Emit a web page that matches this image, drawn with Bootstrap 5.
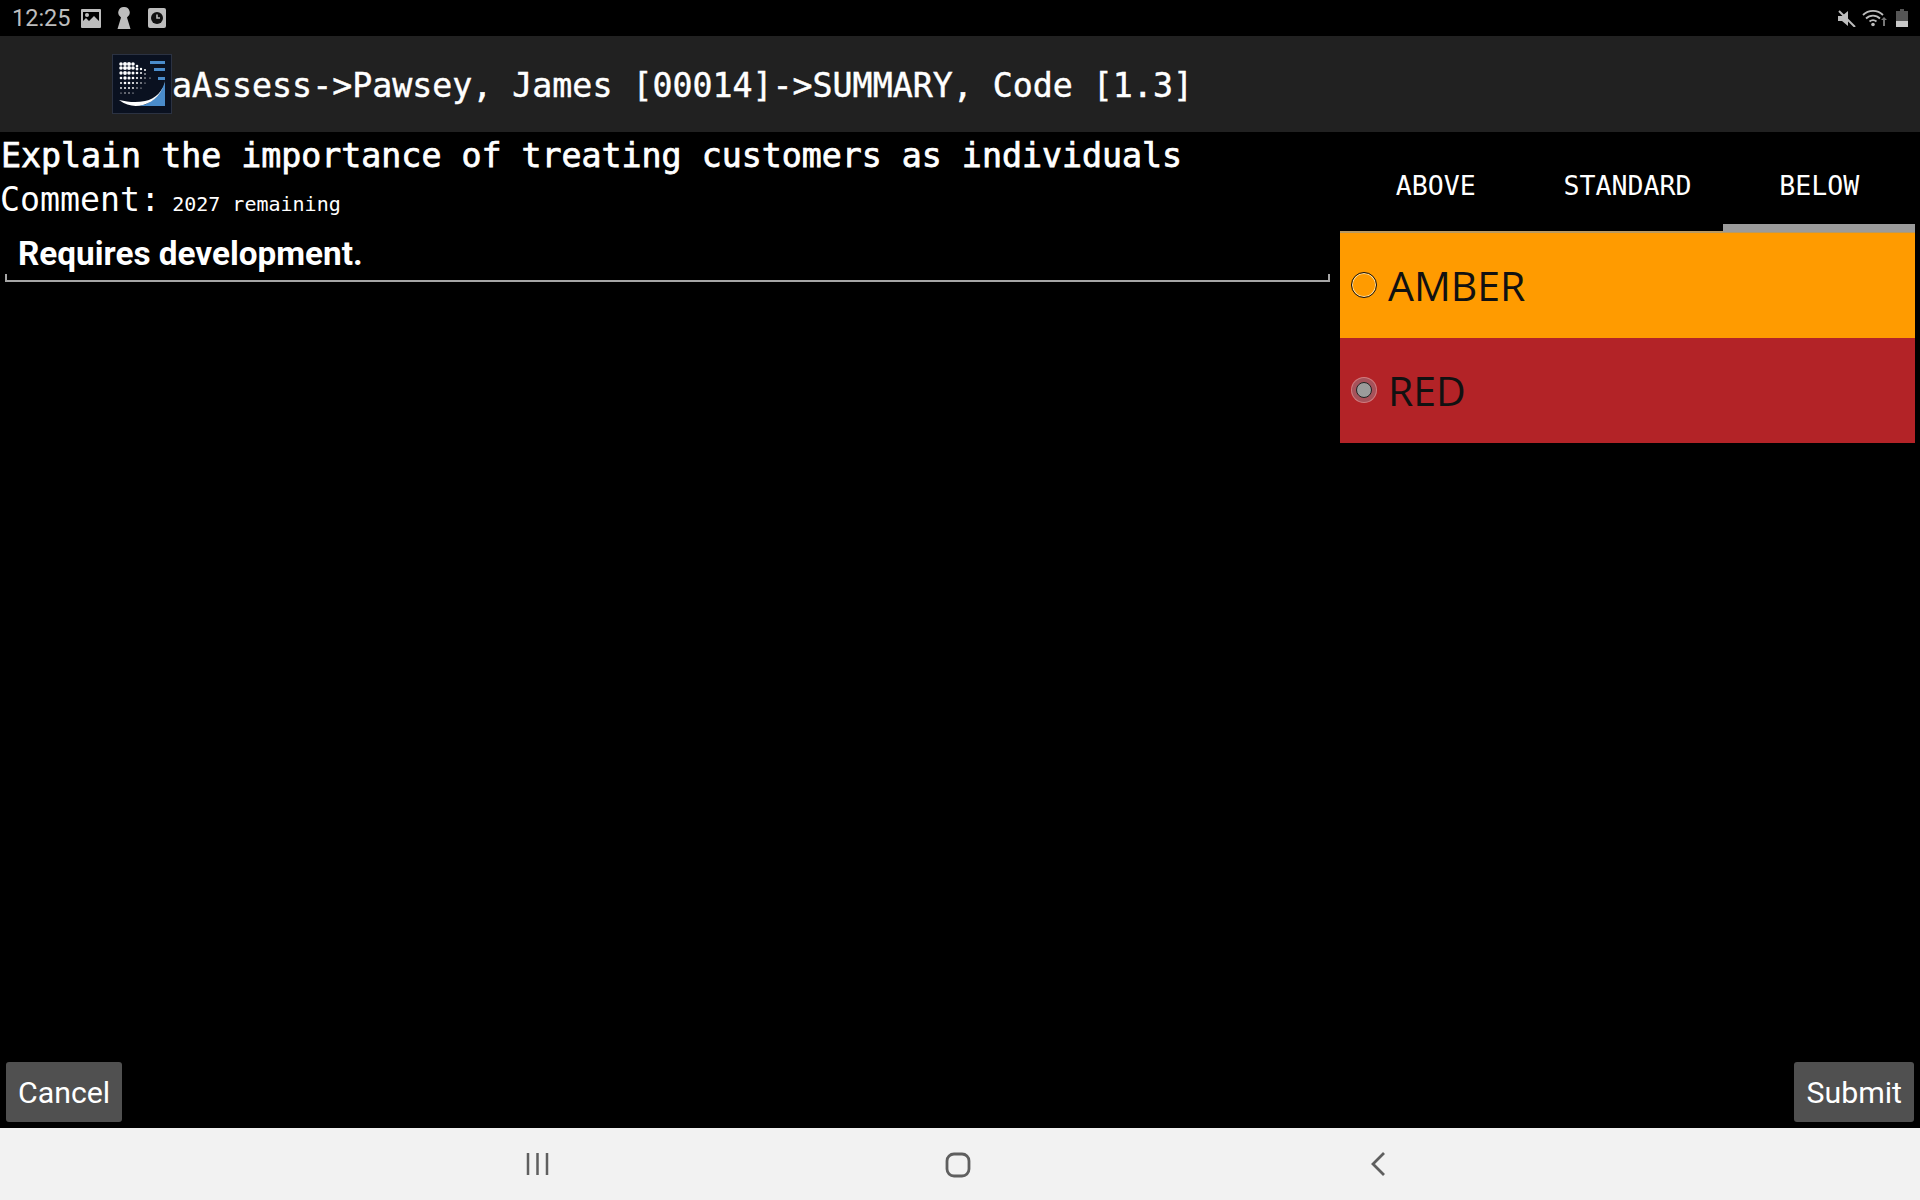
<!DOCTYPE html>
<html lang="en">
<head>
<meta charset="utf-8">
<title>aAssess</title>
<link href="https://cdn.jsdelivr.net/npm/bootstrap@5.3.0/dist/css/bootstrap.min.css" rel="stylesheet">
<style>
html,body{height:100%;}
body{background:#000;color:#fff;overflow:hidden;font-family:"DejaVu Sans Mono",monospace;}
.screen{height:1200px;}
.status-strip{height:36px;background:#000;padding:0 12px 0 12px;color:#bdbdbd;}
.status-time{font-family:Roboto,sans-serif;font-size:23.5px;line-height:36px;width:69px;}
.status-strip svg{display:block;flex:none;}
.app-head{height:96px;background:#212121;padding-left:112px;}
.app-title{font-size:33.25px;line-height:1;white-space:nowrap;-webkit-text-stroke:.45px #fff;padding-top:4px;}
.app-logo{width:60px;height:60px;display:block;flex:none;}
.work-area{min-height:0;}
.left-pane{width:1330px;flex:none;}
.q-text{font-size:33.25px;line-height:44px;padding-left:1px;padding-top:2px;white-space:nowrap;-webkit-text-stroke:.75px #fff;}
.c-label{font-size:33.25px;line-height:44px;white-space:nowrap;}
.c-count{font-size:20px;margin-left:12px;}
.c-field{margin:3px 0 0 5px;height:53px;border-bottom:2px solid #a6a6a6;position:relative;padding-left:13px;font-family:Roboto,sans-serif;font-weight:700;font-size:33.3px;line-height:49px;}
.c-field::before,.c-field::after{content:"";position:absolute;bottom:0;width:2px;height:6px;background:#a6a6a6;}
.c-field::before{left:0;}
.c-field::after{right:0;}
.right-pane{width:575px;margin-left:10px;flex:none;}
.band-tabs{height:99px;}
.band-tabs .nav-link{flex:1 1 0;color:#fff;border-radius:0;font-size:26.6px;line-height:30px;padding:39px 0 0;height:100px;text-align:center;border-bottom:8px solid transparent;}
.band-tabs .nav-link.active{border-bottom-color:#9b9b9b;position:relative;z-index:1;}
.band-rule{height:2px;background:#b99a62;}
.choice{height:105px;margin:0;padding-left:11px;gap:11px;font-family:"Open Sans",sans-serif;font-size:41px;color:#111;}
.choice-amber{background:#ff9b00;}
.choice-red{background:#b32327;}
.choice .form-check-input{width:26px;height:26px;margin:-1px 0 0;flex:none;background:transparent;border:1px solid #111;box-shadow:inset 0 0 0 1px #ffe2a8;}
.choice .form-check-input:checked{background:#9b9b9b;border:1px solid #222;box-shadow:0 0 0 4px #a6525a,0 0 0 5px #cf7d80;width:16px;height:16px;margin:-1px 5px 0;background-image:none;}
.foot-actions{padding:0 6px 6px 6px;}
.act-btn{background:#505050;color:#fff;border:0;border-radius:3px;height:60px;font-family:Roboto,sans-serif;font-size:30.3px;line-height:62px;padding:0 12px;}
.act-btn:hover{background:#505050;color:#fff;}
.sys-nav{height:72px;background:#f2f2f2;position:relative;}
.sys-nav svg{position:absolute;top:22px;}
</style>
</head>
<body>
<div class="screen d-flex flex-column">
  <div class="status-strip d-flex align-items-center">
    <span class="status-time">12:25</span>
    <svg width="20" height="19" viewBox="0 0 20 19" style="margin-right:16px"><path fill="#bdbdbd" fill-rule="evenodd" d="M1 0h18a1 1 0 0 1 1 1v17a1 1 0 0 1-1 1H1a1 1 0 0 1-1-1V1a1 1 0 0 1 1-1zM2 3v9l3-3 3 3 5-5 5 5V3z"/><circle cx="6" cy="6" r="2" fill="#bdbdbd"/></svg>
    <svg width="14" height="22" viewBox="0 0 14 22" style="margin-right:17px"><path fill="#bdbdbd" d="M7 0a5.6 5.6 0 0 1 3 10.4L13.5 22H.5L4 10.4A5.6 5.6 0 0 1 7 0z"/></svg>
    <svg width="18" height="20" viewBox="0 0 18 20"><rect width="18" height="20" rx="2" fill="#bdbdbd"/><circle cx="9" cy="10" r="6" fill="#111"/><path d="M9 6.5V10h3" fill="none" stroke="#bdbdbd" stroke-width="1.6"/></svg>
    <div class="ms-auto d-flex align-items-center">
      <svg width="18" height="17" viewBox="0 0 18 17" style="margin-right:6px"><path fill="#bdbdbd" d="M0 6h4l6-5v15l-6-5H0z"/><path stroke="#bdbdbd" stroke-width="2" d="M1 1l16 16"/></svg>
      <svg width="25" height="18" viewBox="0 0 25 18" style="margin-right:9px"><g fill="none" stroke="#bdbdbd" stroke-width="1.8"><path d="M1 6a14 14 0 0 1 20 0"/><path d="M4 9.500a10 10 0 0 1 14 0"/><path d="M7.500 12.500a5.500 5.500 0 0 1 7 0"/></g><circle cx="11" cy="15.500" r="1.800" fill="#bdbdbd"/><path fill="#777" d="M21 17h2v-6h2l-3-3-3 3h2z"/></svg>
      <svg width="12" height="18" viewBox="0 0 12 18"><path fill="#555" d="M4 0h4v2h4v10H0V2h4z"/><path fill="#c8c8c8" d="M0 12h12v6H0z"/></svg>
    </div>
  </div>

  <header class="app-head d-flex align-items-center">
    <svg class="app-logo" viewBox="0 0 60 60" role="img" aria-label="aAssess logo">
      <rect width="60" height="60" fill="#0a1120"/>
      <rect x=".5" y=".5" width="59" height="59" fill="none" stroke="#2b3242"/>
      <path fill="#4a8ccb" d="M38 7h15v3H38zM42 14h11v3H42zM46 23h7v3h-7zM53 28v24H24c14 0 24-10 29-24z"/>
      <path fill="#fff" d="M7 46c8 6 16 7 24 5 11-3 20-12 22-25-1 10-9 19-20 21-9 2-17 1-26-1z"/>
      <g fill="#fff">
        <circle cx="9" cy="10" r="1.800"/><circle cx="13" cy="10" r="2"/><circle cx="17" cy="10" r="2"/><circle cx="21" cy="10" r="1.800"/><circle cx="25" cy="12" r="1.300"/>
        <circle cx="9" cy="14" r="1.800"/><circle cx="13" cy="14" r="2"/><circle cx="17" cy="14" r="2"/><circle cx="21" cy="14" r="1.800"/><circle cx="25" cy="15" r="1.400"/><circle cx="29" cy="15" r="1.200"/><circle cx="33" cy="16" r="1"/>
        <circle cx="9" cy="19" r="1.700"/><circle cx="13" cy="19" r="1.900"/><circle cx="17" cy="19" r="1.800"/><circle cx="21" cy="19" r="1.500"/><circle cx="25" cy="19" r="1.300"/><circle cx="29" cy="19" r="1"/><circle cx="33" cy="20" r=".8"/>
        <circle cx="9" cy="24" r="1.300"/><circle cx="13" cy="24" r="1.700"/><circle cx="17" cy="24" r="1.500"/><circle cx="21" cy="24" r="1.300"/><circle cx="25" cy="24" r="1.100"/><circle cx="29" cy="24" r=".9"/><circle cx="33" cy="24" r=".7"/><circle cx="38" cy="24" r=".6"/>
        <circle cx="9" cy="29" r="1"/><circle cx="13" cy="29" r="1.300"/><circle cx="17" cy="29" r="1.300"/><circle cx="21" cy="29" r="1.100"/><circle cx="25" cy="29" r=".9"/><circle cx="29" cy="29" r=".8"/><circle cx="33" cy="29" r=".6"/>
        <circle cx="9" cy="34" r=".9"/><circle cx="13" cy="34" r="1"/><circle cx="17" cy="34" r="1"/><circle cx="21" cy="34" r=".9"/><circle cx="25" cy="34" r=".7"/><circle cx="29" cy="34" r=".6"/>
        <circle cx="9" cy="39" r=".6"/><circle cx="13" cy="39" r=".7"/><circle cx="17" cy="39" r=".7"/><circle cx="21" cy="39" r=".6"/>
      </g>
    </svg>
    <span class="app-title">aAssess-&gt;Pawsey, James [00014]-&gt;SUMMARY, Code [1.3]</span>
  </header>

  <main class="work-area flex-grow-1 d-flex">
    <section class="left-pane">
      <div class="q-text">Explain the importance of treating customers as individuals</div>
      <div class="c-label">Comment:<span class="c-count">2027 remaining</span></div>
      <div class="c-field">Requires development.</div>
    </section>
    <section class="right-pane">
      <nav class="nav band-tabs">
        <a class="nav-link" href="#">ABOVE</a>
        <a class="nav-link" href="#">STANDARD</a>
        <a class="nav-link active" href="#">BELOW</a>
      </nav>
      <div class="band-rule"></div>
      <label class="choice choice-amber d-flex align-items-center">
        <input class="form-check-input" type="radio" name="rating"><span>AMBER</span>
      </label>
      <label class="choice choice-red d-flex align-items-center">
        <input class="form-check-input" type="radio" name="rating" checked><span>RED</span>
      </label>
    </section>
  </main>

  <div class="foot-actions d-flex justify-content-between">
    <button class="btn act-btn" type="button">Cancel</button>
    <button class="btn act-btn" type="button">Submit</button>
  </div>

  <div class="sys-nav">
    <svg style="left:526px" width="23" height="26" viewBox="0 0 23 26"><path stroke="#5f5f5f" stroke-width="2.500" d="M2 3v22M11.500 3v22M21 3v22"/></svg>
    <svg style="left:945px" width="26" height="28" viewBox="0 0 26 28"><rect x="2" y="4" width="22" height="22" rx="7" fill="none" stroke="#5f5f5f" stroke-width="2.800"/></svg>
    <svg style="left:1370px" width="16" height="26" viewBox="0 0 16 26"><path d="M14 3L3 14l11 11" fill="none" stroke="#5f5f5f" stroke-width="2.800"/></svg>
  </div>
</div>
<script src="https://cdn.jsdelivr.net/npm/bootstrap@5.3.0/dist/js/bootstrap.bundle.min.js"></script>
</body>
</html>
